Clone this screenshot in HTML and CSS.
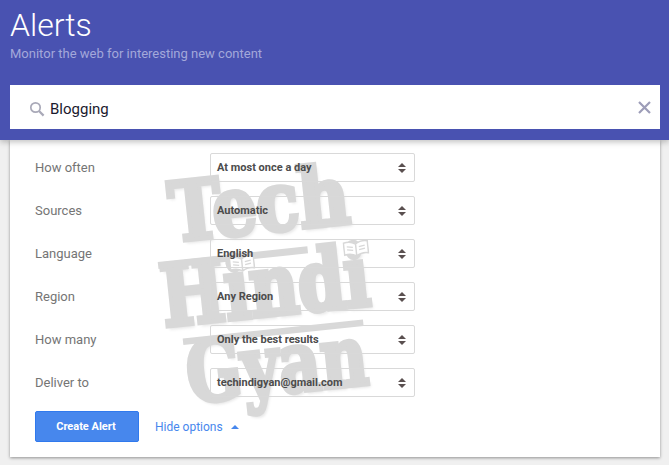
FILE: index.html
```html
<!DOCTYPE html>
<html lang="en">
<head>
    <meta charset="UTF-8">
    <title>Alerts</title>
    <link rel="stylesheet" href="styles.css">
</head>
<body>
    <div class="header">
        <h1>Alerts</h1>
        <div class="subtitle">Monitor the web for interesting new content</div>
        <div class="search-box">
            <svg class="search-icon" width="16" height="16" viewBox="0 0 16 16">
                <circle cx="6.5" cy="6.5" r="4.7" fill="none" stroke="#a9a9b8" stroke-width="1.7"/>
                <path d="M10 10l4.6 4.6" stroke="#a9a9b8" stroke-width="2.2"/>
            </svg>
            <span class="search-text">Blogging</span>
            <svg class="clear-icon" width="13" height="13" viewBox="0 0 13 13">
                <path d="M1 1l11 11M12 1L1 12" stroke="#9d9db8" stroke-width="2.2"/>
            </svg>
        </div>
    </div>
    <div class="card">
        <div class="watermark">
            <div class="mark-word mark-tech">Tech</div>
            <div class="mark-word mark-hindi">Hindi</div>
            <div class="mark-word mark-gyan">Gyan</div>
            <svg class="mark-book book-right" width="26" height="17" viewBox="0 0 26 17">
                <path d="M13 4C10 2 5 1 1 2v12c4-1 9 0 12 2 3-2 8-3 12-2V2c-4-1-9 0-12 2zM13 4v12" fill="#fff" stroke="#d8d8d8" stroke-width="1.5"/>
                <path d="M4 6l6 1M4 9l6 1M16 7l6-1M16 10l6-1" stroke="#d8d8d8" stroke-width="1.2"/>
            </svg>
            <svg class="mark-book book-left" width="26" height="17" viewBox="0 0 26 17">
                <path d="M13 4C10 2 5 1 1 2v12c4-1 9 0 12 2 3-2 8-3 12-2V2c-4-1-9 0-12 2zM13 4v12" fill="#fff" stroke="#d8d8d8" stroke-width="1.5"/>
                <path d="M4 6l6 1M4 9l6 1M16 7l6-1M16 10l6-1" stroke="#d8d8d8" stroke-width="1.2"/>
            </svg>
        </div>
        <div class="option-row">
            <label>How often</label>
            <div class="select-box">At most once a day<span class="arrows"></span></div>
        </div>
        <div class="option-row">
            <label>Sources</label>
            <div class="select-box">Automatic<span class="arrows"></span></div>
        </div>
        <div class="option-row">
            <label>Language</label>
            <div class="select-box">English<span class="arrows"></span></div>
        </div>
        <div class="option-row">
            <label>Region</label>
            <div class="select-box">Any Region<span class="arrows"></span></div>
        </div>
        <div class="option-row">
            <label>How many</label>
            <div class="select-box">Only the best results<span class="arrows"></span></div>
        </div>
        <div class="option-row">
            <label>Deliver to</label>
            <div class="select-box">techindigyan@gmail.com<span class="arrows"></span></div>
        </div>
        <div class="actions">
            <button class="create-btn">Create Alert</button>
            <a class="hide-link">Hide options<span class="caret-up"></span></a>
        </div>
    </div>
</body>
</html>
```

FILE: styles.css
```css
body {
    font-family: Roboto, "Liberation Sans", sans-serif;
    background-color: #f0f0f0;
    margin: 0;
    height: 465px;
    overflow: hidden;
}
.header {
    background-color: #4952b1;
    height: 140px;
    padding: 0 9px 0 10px;
    box-sizing: border-box;
    position: relative;
    z-index: 2;
    box-shadow: 0 2px 6px rgba(0, 0, 0, 0.25);
}
h1 {
    margin: 0;
    padding-top: 6px;
    color: #fff;
    font-size: 32px;
    font-weight: 300;
    line-height: 38px;
}
.subtitle {
    color: #a3a8da;
    font-size: 13px;
    line-height: 16px;
    margin-top: 2px;
}
.search-box {
    background-color: #fff;
    height: 44px;
    margin-top: 23px;
    display: flex;
    align-items: center;
    padding: 3px 9px 0 19px;
    box-sizing: border-box;
}
.search-icon {
    margin-right: 5px;
}
.search-text {
    flex: 1;
    color: #1a1a2e;
    font-size: 15px;
}
.clear-icon {
    margin-bottom: 3px;
}
.card {
    background-color: #fff;
    margin: 0 9px 0 10px;
    height: 317px;
    box-sizing: border-box;
    padding: 13px 25px 0 25px;
    position: relative;
    box-shadow: 0 1px 3px rgba(0, 0, 0, 0.4);
}
.option-row {
    display: flex;
    align-items: center;
    height: 29px;
    margin-bottom: 14px;
    position: relative;
}
.option-row label {
    width: 175px;
    color: #757575;
    font-size: 13px;
}
.select-box {
    width: 205px;
    height: 29px;
    box-sizing: border-box;
    border: 1px solid #d9d9d9;
    border-radius: 2px;
    padding: 0 6px;
    display: flex;
    align-items: center;
    justify-content: space-between;
    color: #4c4c4c;
    font-size: 11px;
    font-weight: 700;
}
.arrows {
    width: 8px;
    display: flex;
    flex-direction: column;
    gap: 2px;
    margin-right: 2px;
}
.arrows::before,
.arrows::after {
    content: "";
    width: 0;
    height: 0;
    border-left: 4px solid transparent;
    border-right: 4px solid transparent;
}
.arrows::before {
    border-bottom: 4px solid #5a5050;
}
.arrows::after {
    border-top: 4px solid #5a5050;
}
.actions {
    display: flex;
    align-items: center;
    margin-top: 1px;
    position: relative;
}
.create-btn {
    width: 104px;
    height: 31px;
    background-color: #4787ed;
    border: 1px solid #3079ed;
    border-radius: 2px;
    color: #fff;
    font-family: inherit;
    font-size: 11px;
    font-weight: 700;
    padding: 0 2px 0 0;
}
.hide-link {
    color: #4787ed;
    font-size: 12px;
    margin-left: 16px;
    display: flex;
    align-items: center;
}
.caret-up {
    width: 0;
    height: 0;
    margin-left: 8px;
    border-left: 4px solid transparent;
    border-right: 4px solid transparent;
    border-bottom: 4px solid #4787ed;
}
.watermark {
    position: absolute;
    left: 0;
    top: 0;
    width: 100%;
    height: 100%;
    overflow: hidden;
}
.mark-word {
    position: absolute;
    font-family: "DejaVu Serif", "Liberation Serif", serif;
    font-stretch: condensed;
    font-weight: 700;
    color: #d8d8d8;
    line-height: 1;
    transform-origin: left top;
    -webkit-text-stroke: 4px #d8d8d8;
    text-shadow: 2px 3px 3px rgba(0, 0, 0, 0.1);
}
.mark-hindi::before,
.mark-gyan::before {
    content: "";
    position: absolute;
    left: 0;
    top: 6px;
    height: 6px;
    background-color: #d8d8d8;
}
.mark-hindi::before {
    width: 72%;
}
.mark-gyan::before {
    width: 100%;
}
.mark-tech {
    left: 155px;
    top: 33px;
    font-size: 76px;
    transform: rotate(-6deg) scale(1.02, 1.08);
}
.mark-hindi {
    left: 147px;
    top: 115px;
    font-size: 72px;
    transform: rotate(-6deg) scale(1.03, 1.18);
}
.mark-gyan {
    left: 172px;
    top: 192px;
    font-size: 78px;
    transform: rotate(-6deg) scale(0.92, 1.08);
}
.mark-book {
    position: absolute;
}
.book-right {
    left: 333px;
    top: 100px;
    transform: rotate(-6deg);
}
.book-left {
    left: 219px;
    top: 115px;
    transform: rotate(-6deg);
}
```
